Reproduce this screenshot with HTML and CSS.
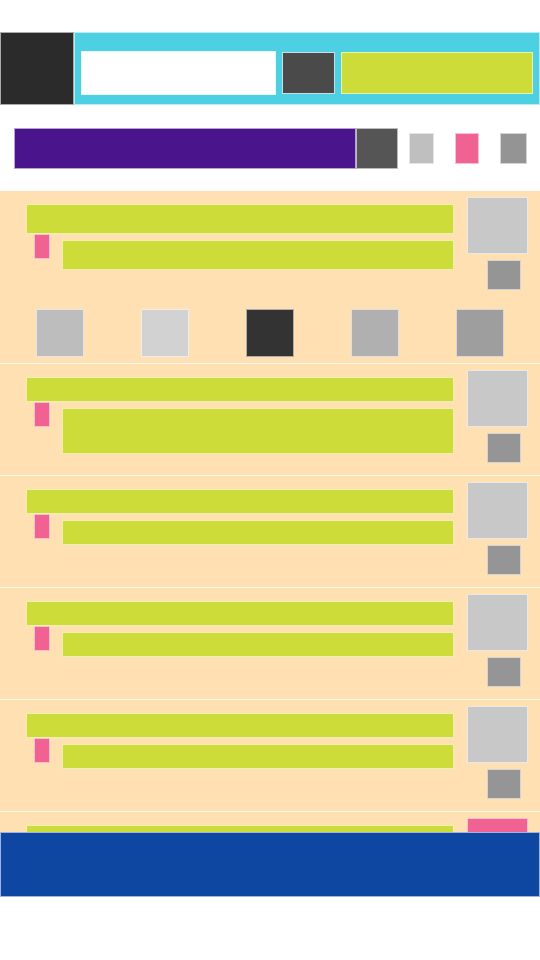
FILE: index.html
```html
<!DOCTYPE html>
<html lang="en">
<head>
<meta charset="utf-8">
<title>Wireframe</title>
<link rel="stylesheet" href="styles.css">
</head>
<body>
<div class="status"></div>
<header class="appbar">
  <div class="logo blk"></div>
  <div class="bar blk">
    <div class="search blk"></div>
    <div class="btn blk"></div>
    <div class="cta blk"></div>
  </div>
</header>
<div class="toolbar">
  <div class="tabs blk"></div>
  <div class="tab-btn blk"></div>
  <div class="ic ic1 blk"></div>
  <div class="ic ic2 blk"></div>
  <div class="ic ic3 blk"></div>
</div>
<main class="list">
  <article class="card card-first">
    <div class="card-row">
      <div class="card-main">
        <div class="title title-lg blk"></div>
        <div class="sub">
          <div class="tag blk"></div>
          <div class="desc desc-md blk"></div>
        </div>
      </div>
      <div class="card-side">
        <div class="thumb blk"></div>
        <div class="mini blk"></div>
      </div>
    </div>
    <div class="squares">
      <div class="sq sq1 blk"></div>
      <div class="sq sq2 blk"></div>
      <div class="sq sq3 blk"></div>
      <div class="sq sq4 blk"></div>
      <div class="sq sq5 blk"></div>
    </div>
  </article>
  <article class="card">
    <div class="card-row">
      <div class="card-main">
        <div class="title blk"></div>
        <div class="sub">
          <div class="tag blk"></div>
          <div class="desc desc-lg blk"></div>
        </div>
      </div>
      <div class="card-side">
        <div class="thumb blk"></div>
        <div class="mini blk"></div>
      </div>
    </div>
  </article>
  <article class="card">
    <div class="card-row">
      <div class="card-main">
        <div class="title blk"></div>
        <div class="sub">
          <div class="tag blk"></div>
          <div class="desc blk"></div>
        </div>
      </div>
      <div class="card-side">
        <div class="thumb blk"></div>
        <div class="mini blk"></div>
      </div>
    </div>
  </article>
  <article class="card">
    <div class="card-row">
      <div class="card-main">
        <div class="title blk"></div>
        <div class="sub">
          <div class="tag blk"></div>
          <div class="desc blk"></div>
        </div>
      </div>
      <div class="card-side">
        <div class="thumb blk"></div>
        <div class="mini blk"></div>
      </div>
    </div>
  </article>
  <article class="card">
    <div class="card-row">
      <div class="card-main">
        <div class="title blk"></div>
        <div class="sub">
          <div class="tag blk"></div>
          <div class="desc blk"></div>
        </div>
      </div>
      <div class="card-side">
        <div class="thumb blk"></div>
        <div class="mini blk"></div>
      </div>
    </div>
  </article>
  <article class="card">
    <div class="card-row">
      <div class="card-main">
        <div class="title blk"></div>
        <div class="sub">
          <div class="tag blk"></div>
          <div class="desc blk"></div>
        </div>
      </div>
      <div class="card-side">
        <div class="thumb thumb-pink blk"></div>
        <div class="mini blk"></div>
      </div>
    </div>
  </article>
</main>
<footer class="nav blk"></footer>
</body>
</html>
```
FILE: styles.css
```css
* { box-sizing: border-box; }
html, body { margin: 0; padding: 0; background: #ffffff; }
body { width: 540px; font-family: "Liberation Sans", Arial, sans-serif; }

.blk { border: 1px solid rgba(255, 255, 255, 0.6); }

.status { height: 32px; }

.appbar { display: flex; height: 73px; }
.logo { width: 74px; background: #2b2b2b; }
.bar {
  flex: 1;
  display: flex;
  align-items: flex-start;
  background: #4dd0e1;
  padding: 18px 6px 0 6px;
  gap: 6px;
}
.search { width: 195px; height: 44px; background: #ffffff; border-color: #e6f7fa; }
.btn { width: 53px; height: 42px; margin-top: 1px; background: #4a4a4a; border-color: #c8dfe3; }
.cta { flex: 1; height: 42px; margin-top: 1px; background: #cddc39; }

.toolbar {
  display: flex;
  align-items: center;
  height: 86px;
  padding: 0 13px 0 14px;
}
.tabs { width: 342px; height: 41px; background: #4a148c; }
.tab-btn { width: 42px; height: 41px; background: #555555; }
.ic { height: 31px; }
.ic1 { width: 25px; margin-left: 11px; background: #bfbfbf; }
.ic2 { width: 24px; margin-left: 21px; background: #f06292; }
.ic3 { width: 27px; margin-left: 21px; background: #949494; }

.list {
  height: 641px;
  overflow: hidden;
  background: #ffe0b2;
}

.card {
  padding: 6px 12px 12px 26px;
  border-bottom: 1px solid rgba(255, 255, 255, 0.75);
}
.card-first { padding-bottom: 6px; }

.card-row { display: flex; gap: 13px; }
.card-main { flex: 1; padding-top: 7px; }
.card-side { width: 61px; display: flex; flex-direction: column; }

.title { height: 25px; background: #cddc39; }
.title-lg { height: 30px; }
.sub { display: flex; align-items: flex-start; }
.tag { width: 16px; height: 25px; margin-left: 8px; background: #f06292; }
.desc { flex: 1; height: 25px; margin-left: 12px; margin-top: 6px; background: #cddc39; }
.desc-md { height: 30px; }
.desc-lg { height: 46px; }

.thumb { height: 57px; background: #c8c8c8; }
.thumb-pink { background: #f06292; }
.mini { width: 34px; height: 30px; margin-top: 6px; margin-left: 20px; background: #959595; }

.squares {
  display: flex;
  justify-content: space-around;
  margin: 19px -5px 0 -19px;
}
.sq { width: 48px; height: 48px; }
.sq1 { background: #bdbdbd; }
.sq2 { background: #d2d2d2; }
.sq3 { background: #333333; }
.sq4 { background: #b0b0b0; }
.sq5 { background: #9e9e9e; }

.nav { height: 65px; background: #0d47a1; }
```
